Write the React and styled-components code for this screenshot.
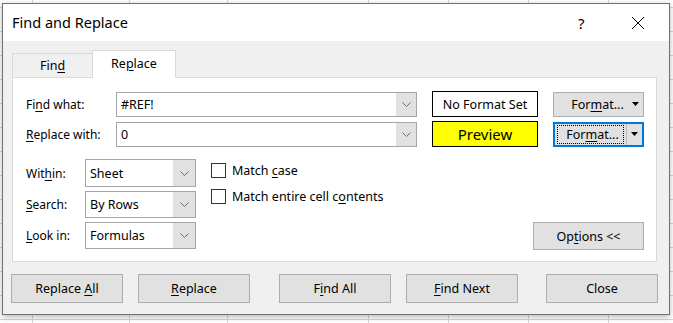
import React from 'react';
import styled, { createGlobalStyle } from 'styled-components';

const GlobalStyle = createGlobalStyle`
  html, body {
    margin: 0;
    padding: 0;
    background: #fff;
  }
  body {
    font-family: "Noto Sans", "Open Sans", Arial, sans-serif;
    font-size: 12px;
    color: #000;
  }
`;

const gridLines = [32, 129, 227, 368, 448, 528, 608]
  .map((x) => `linear-gradient(to right, transparent ${x}px, #d6d6d6 ${x}px, #d6d6d6 ${x + 1}px, transparent ${x + 1}px)`)
  .join(', ');

function Key({ children }) {
  return <U>{children}</U>;
}

function Chevron() {
  return (
    <svg width="9" height="5" viewBox="0 0 9 5">
      <polyline points="0.5,0.5 4.5,4.5 8.5,0.5" fill="none" stroke="#6d6d6d" strokeWidth="1" />
    </svg>
  );
}

function Caret() {
  return (
    <svg width="7" height="4" viewBox="0 0 7 4">
      <polygon points="0,0 7,0 3.5,4" fill="#000" />
    </svg>
  );
}

function Combo({ width, height, value, buttonWidth }) {
  return (
    <ComboBox width={width} height={height}>
      <ComboValue>{value}</ComboValue>
      <ComboButton width={buttonWidth}>
        <Chevron />
      </ComboButton>
    </ComboBox>
  );
}

function App() {
  return (
    <>
      <GlobalStyle />
      <Sheet>
        <Dialog>
          <TitleBar>
            <Title>Find and Replace</Title>
            <Help>?</Help>
            <CloseIcon>
              <svg width="14" height="14" viewBox="0 0 14 14">
                <path d="M1 1 L13 13 M13 1 L1 13" stroke="#000" strokeWidth="1" />
              </svg>
            </CloseIcon>
          </TitleBar>
          <Body>
            <Tabs>
              <Tab><span>Fin<Key>d</Key></span></Tab>
              <Tab active><span>Re<Key>p</Key>lace</span></Tab>
            </Tabs>
            <Panel>
              <FieldRow>
                <FieldLabel>Fi<Key>n</Key>d what:</FieldLabel>
                <Combo width={301} height={25} buttonWidth={20} value="#REF!" />
                <FormatBox>No Format Set</FormatBox>
                <FormatButton>
                  <FormatText>For<Key>m</Key>at...</FormatText>
                  <Caret />
                </FormatButton>
              </FieldRow>
              <FieldRow>
                <FieldLabel><Key>R</Key>eplace with:</FieldLabel>
                <Combo width={301} height={25} buttonWidth={20} value="0" />
                <FormatBox preview>Preview</FormatBox>
                <FormatButton focused>
                  <FocusRing><span>For<Key>m</Key>at...</span></FocusRing>
                  <Divider />
                  <Caret />
                </FormatButton>
              </FieldRow>
              <Options>
                <SelectColumn>
                  <SelectRow>
                    <SelectLabel>Wit<Key>h</Key>in:</SelectLabel>
                    <Combo width={111} height={28} buttonWidth={22} value="Sheet" />
                  </SelectRow>
                  <SelectRow>
                    <SelectLabel><Key>S</Key>earch:</SelectLabel>
                    <Combo width={111} height={27} buttonWidth={22} value="By Rows" />
                  </SelectRow>
                  <SelectRow>
                    <SelectLabel><Key>L</Key>ook in:</SelectLabel>
                    <Combo width={111} height={27} buttonWidth={22} value="Formulas" />
                  </SelectRow>
                </SelectColumn>
                <CheckColumn>
                  <CheckRow>
                    <CheckBox />
                    <span>Match <Key>c</Key>ase</span>
                  </CheckRow>
                  <CheckRow>
                    <CheckBox />
                    <span>Match entire cell c<Key>o</Key>ntents</span>
                  </CheckRow>
                </CheckColumn>
                <OptionsButton><span>Op<Key>t</Key>ions &lt;&lt;</span></OptionsButton>
              </Options>
            </Panel>
            <ButtonBar>
              <Button><span>Replace <Key>A</Key>ll</span></Button>
              <Button offset={15}><span><Key>R</Key>eplace</span></Button>
              <Button offset={29}><span>F<Key>i</Key>nd All</span></Button>
              <Button offset={15}><span><Key>F</Key>ind Next</span></Button>
              <Button offset={28}><span>Close</span></Button>
            </ButtonBar>
          </Body>
        </Dialog>
      </Sheet>
    </>
  );
}

const Sheet = styled.div`
  width: 673px;
  height: 323px;
  overflow: hidden;
  padding: 3px 0 0 2px;
  box-sizing: border-box;
  background-color: #fff;
  background-image:
    repeating-linear-gradient(to bottom, transparent 0, transparent 7px, #d6d6d6 7px, #d6d6d6 8px, transparent 8px, transparent 24px),
    ${gridLines};
`;

const Dialog = styled.div`
  width: 668px;
  height: 312px;
  box-sizing: border-box;
  border: 1px solid #707070;
  background: #f0f0f0;
  box-shadow: 0 2px 6px rgba(0, 0, 0, 0.28);
  display: flex;
  flex-direction: column;
`;

const TitleBar = styled.div`
  height: 37px;
  background: #fff;
  display: flex;
  align-items: center;
  padding-left: 9px;
`;

const Title = styled.div`
  font-size: 14.5px;
  flex: 1;
  padding-bottom: 1px;
`;

const Help = styled.div`
  font-size: 15px;
  width: 12px;
  margin-right: 41px;
`;

const CloseIcon = styled.div`
  display: flex;
  margin-right: 24px;
`;

const Body = styled.div`
  flex: 1;
  padding: 9px 11px 0 9px;
  display: flex;
  flex-direction: column;
`;

const U = styled.span`
  text-decoration: underline;
  text-underline-offset: 2px;
`;

const Tabs = styled.div`
  display: flex;
  align-items: flex-end;
  height: 28px;
  margin-bottom: -1px;
  position: relative;
  z-index: 1;
`;

const Tab = styled.div`
  box-sizing: border-box;
  display: flex;
  align-items: center;
  justify-content: center;
  width: ${(p) => (p.active ? 84 : 80)}px;
  height: ${(p) => (p.active ? 28 : 25)}px;
  padding-bottom: ${(p) => (p.active ? 3 : 1)}px;
  background: ${(p) => (p.active ? '#fff' : '#f0f0f0')};
  border: 1px solid #d9d9d9;
  border-bottom: ${(p) => (p.active ? 'none' : '1px solid #d9d9d9')};
  border-right: ${(p) => (p.active ? '1px solid #d9d9d9' : 'none')};
  font-size: 12.5px;
`;

const Panel = styled.div`
  box-sizing: border-box;
  width: 645px;
  height: 185px;
  background: #fff;
  border: 1px solid #d9d9d9;
  padding: 13px 12px 0 13px;
  display: flex;
  flex-direction: column;
  gap: 4px;
`;

const FieldRow = styled.div`
  display: flex;
  align-items: center;
  height: 26px;
`;

const FieldLabel = styled.div`
  width: 90px;
`;

const ComboBox = styled.div`
  box-sizing: border-box;
  width: ${(p) => p.width}px;
  height: ${(p) => p.height}px;
  border: 1px solid #a6a6a6;
  display: flex;
  background: #fff;
`;

const ComboValue = styled.div`
  flex: 1;
  display: flex;
  align-items: center;
  padding-left: 4px;
  font-size: 12.5px;
`;

const ComboButton = styled.div`
  width: ${(p) => p.width}px;
  background: #e1e1e1;
  display: flex;
  align-items: center;
  justify-content: center;
`;

const FormatBox = styled.div`
  box-sizing: border-box;
  width: 106px;
  height: 26px;
  margin-left: 15px;
  border: 1px solid #000;
  background: ${(p) => (p.preview ? '#ffff00' : '#fff')};
  font-size: ${(p) => (p.preview ? '15px' : '12.5px')};
  display: flex;
  align-items: center;
  justify-content: center;
`;

const FormatButton = styled.div`
  box-sizing: border-box;
  width: 91px;
  height: 25px;
  margin-left: 15px;
  background: #e1e1e1;
  border: ${(p) => (p.focused ? '2px solid #0078d7' : '1px solid #adadad')};
  display: flex;
  align-items: center;
  padding: 0 4px 0 ${(p) => (p.focused ? 2 : 3)}px;
  font-size: 12.5px;
`;

const FormatText = styled.div`
  flex: 1;
  text-align: center;
  padding-left: 6px;
`;

const FocusRing = styled.div`
  flex: 1;
  height: 17px;
  border: 1px dotted #000;
  display: flex;
  align-items: center;
  justify-content: center;
  padding-left: 4px;
`;

const Divider = styled.div`
  width: 1px;
  height: 21px;
  background: #bdbdbd;
  margin: 0 4px 0 2px;
`;

const Options = styled.div`
  display: flex;
  margin-top: 8px;
`;

const SelectColumn = styled.div`
  display: flex;
  flex-direction: column;
  gap: 4px;
`;

const SelectRow = styled.div`
  display: flex;
  align-items: center;
`;

const SelectLabel = styled.div`
  width: 59px;
`;

const CheckColumn = styled.div`
  display: flex;
  flex-direction: column;
  gap: 9px;
  margin-left: 15px;
  padding-top: 3px;
`;

const CheckRow = styled.div`
  display: flex;
  align-items: center;
  gap: 6px;
  font-size: 12.5px;
`;

const CheckBox = styled.div`
  box-sizing: border-box;
  width: 15px;
  height: 15px;
  border: 1px solid #333;
  background: #fff;
`;

const OptionsButton = styled.div`
  box-sizing: border-box;
  width: 111px;
  height: 28px;
  margin-left: auto;
  align-self: flex-end;
  margin-bottom: -1px;
  background: #e1e1e1;
  border: 1px solid #adadad;
  display: flex;
  align-items: center;
  justify-content: center;
  font-size: 12.5px;
`;

const ButtonBar = styled.div`
  display: flex;
  margin-top: 12px;
  margin-left: -1px;
`;

const Button = styled.div`
  box-sizing: border-box;
  width: 112px;
  height: 29px;
  margin-left: ${(p) => p.offset || 0}px;
  background: #e1e1e1;
  border: 1px solid #adadad;
  display: flex;
  align-items: center;
  justify-content: center;
  font-size: 12.5px;
`;

export default App;
